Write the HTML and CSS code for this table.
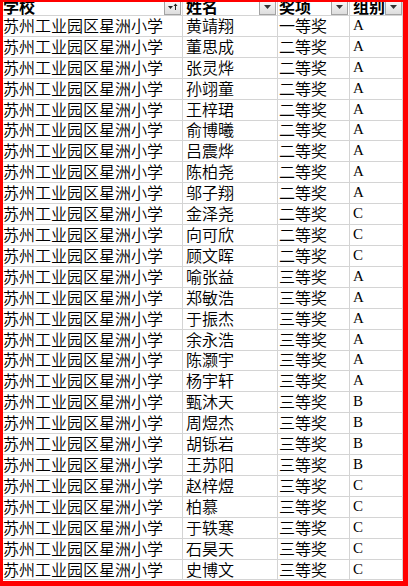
FILE: index.html
```html
<!DOCTYPE html>
<html lang="zh">
<head>
<meta charset="utf-8">
<link rel="stylesheet" href="styles.css">
</head>
<body>
<div class="frame">
  <div class="sheet">
    <div class="cell head c1"><span class="htext">学校</span><span class="btn"><svg width="17" height="17" viewBox="0 0 17 17"><defs><linearGradient id="g1" x1="0" y1="0" x2="0" y2="1"><stop offset="0" stop-color="#ffffff"/><stop offset="1" stop-color="#dcdcdc"/></linearGradient></defs><rect x="0.5" y="0.5" width="16" height="16" fill="url(#g1)" stroke="#a3a3a3"/><path d="M4 8h5l-2.5 3z" fill="#222"/><path d="M11.5 6v6" stroke="#222" stroke-width="1"/><path d="M9.5 8l2-2.5 2 2.5z" fill="#222"/></svg></span></div>
    <div class="cell head c2"><span class="htext">姓名</span><span class="btn"><svg width="17" height="17" viewBox="0 0 17 17"><defs><linearGradient id="g2" x1="0" y1="0" x2="0" y2="1"><stop offset="0" stop-color="#ffffff"/><stop offset="1" stop-color="#dcdcdc"/></linearGradient></defs><rect x="0.5" y="0.5" width="16" height="16" fill="url(#g2)" stroke="#a3a3a3"/><path d="M5 7h7l-3.5 4z" fill="#333"/></svg></span></div>
    <div class="cell head c3"><span class="htext">奖项</span><span class="btn"><svg width="17" height="17" viewBox="0 0 17 17"><defs><linearGradient id="g3" x1="0" y1="0" x2="0" y2="1"><stop offset="0" stop-color="#ffffff"/><stop offset="1" stop-color="#dcdcdc"/></linearGradient></defs><rect x="0.5" y="0.5" width="16" height="16" fill="url(#g3)" stroke="#a3a3a3"/><path d="M5 7h7l-3.5 4z" fill="#333"/></svg></span></div>
    <div class="cell head c4"><span class="htext">组别</span><span class="btn"><svg width="17" height="17" viewBox="0 0 17 17"><defs><linearGradient id="g4" x1="0" y1="0" x2="0" y2="1"><stop offset="0" stop-color="#ffffff"/><stop offset="1" stop-color="#dcdcdc"/></linearGradient></defs><rect x="0.5" y="0.5" width="16" height="16" fill="url(#g4)" stroke="#a3a3a3"/><path d="M5 7h7l-3.5 4z" fill="#333"/></svg></span></div>

    <div class="cell c1">苏州工业园区星洲小学</div><div class="cell c2">黄靖翔</div><div class="cell c3">一等奖</div><div class="cell c4 lat">A</div>
    <div class="cell c1">苏州工业园区星洲小学</div><div class="cell c2">董思成</div><div class="cell c3">二等奖</div><div class="cell c4 lat">A</div>
    <div class="cell c1">苏州工业园区星洲小学</div><div class="cell c2">张灵烨</div><div class="cell c3">二等奖</div><div class="cell c4 lat">A</div>
    <div class="cell c1">苏州工业园区星洲小学</div><div class="cell c2">孙翊童</div><div class="cell c3">二等奖</div><div class="cell c4 lat">A</div>
    <div class="cell c1">苏州工业园区星洲小学</div><div class="cell c2">王梓珺</div><div class="cell c3">二等奖</div><div class="cell c4 lat">A</div>
    <div class="cell c1">苏州工业园区星洲小学</div><div class="cell c2">俞博曦</div><div class="cell c3">二等奖</div><div class="cell c4 lat">A</div>
    <div class="cell c1">苏州工业园区星洲小学</div><div class="cell c2">吕震烨</div><div class="cell c3">二等奖</div><div class="cell c4 lat">A</div>
    <div class="cell c1">苏州工业园区星洲小学</div><div class="cell c2">陈柏尧</div><div class="cell c3">二等奖</div><div class="cell c4 lat">A</div>
    <div class="cell c1">苏州工业园区星洲小学</div><div class="cell c2">邬子翔</div><div class="cell c3">二等奖</div><div class="cell c4 lat">A</div>
    <div class="cell c1">苏州工业园区星洲小学</div><div class="cell c2">金泽尧</div><div class="cell c3">二等奖</div><div class="cell c4 lat">C</div>
    <div class="cell c1">苏州工业园区星洲小学</div><div class="cell c2">向可欣</div><div class="cell c3">二等奖</div><div class="cell c4 lat">C</div>
    <div class="cell c1">苏州工业园区星洲小学</div><div class="cell c2">顾文晖</div><div class="cell c3">二等奖</div><div class="cell c4 lat">C</div>
    <div class="cell c1">苏州工业园区星洲小学</div><div class="cell c2">喻张益</div><div class="cell c3">三等奖</div><div class="cell c4 lat">A</div>
    <div class="cell c1">苏州工业园区星洲小学</div><div class="cell c2">郑敏浩</div><div class="cell c3">三等奖</div><div class="cell c4 lat">A</div>
    <div class="cell c1">苏州工业园区星洲小学</div><div class="cell c2">于振杰</div><div class="cell c3">三等奖</div><div class="cell c4 lat">A</div>
    <div class="cell c1">苏州工业园区星洲小学</div><div class="cell c2">余永浩</div><div class="cell c3">三等奖</div><div class="cell c4 lat">A</div>
    <div class="cell c1">苏州工业园区星洲小学</div><div class="cell c2">陈灏宇</div><div class="cell c3">三等奖</div><div class="cell c4 lat">A</div>
    <div class="cell c1">苏州工业园区星洲小学</div><div class="cell c2">杨宇轩</div><div class="cell c3">三等奖</div><div class="cell c4 lat">A</div>
    <div class="cell c1">苏州工业园区星洲小学</div><div class="cell c2">甄沐天</div><div class="cell c3">三等奖</div><div class="cell c4 lat">B</div>
    <div class="cell c1">苏州工业园区星洲小学</div><div class="cell c2">周煜杰</div><div class="cell c3">三等奖</div><div class="cell c4 lat">B</div>
    <div class="cell c1">苏州工业园区星洲小学</div><div class="cell c2">胡铄岩</div><div class="cell c3">三等奖</div><div class="cell c4 lat">B</div>
    <div class="cell c1">苏州工业园区星洲小学</div><div class="cell c2">王苏阳</div><div class="cell c3">三等奖</div><div class="cell c4 lat">B</div>
    <div class="cell c1">苏州工业园区星洲小学</div><div class="cell c2">赵梓煜</div><div class="cell c3">三等奖</div><div class="cell c4 lat">C</div>
    <div class="cell c1">苏州工业园区星洲小学</div><div class="cell c2">柏慕</div><div class="cell c3">三等奖</div><div class="cell c4 lat">C</div>
    <div class="cell c1">苏州工业园区星洲小学</div><div class="cell c2">于轶寒</div><div class="cell c3">三等奖</div><div class="cell c4 lat">C</div>
    <div class="cell c1">苏州工业园区星洲小学</div><div class="cell c2">石昊天</div><div class="cell c3">三等奖</div><div class="cell c4 lat">C</div>
    <div class="cell c1">苏州工业园区星洲小学</div><div class="cell c2">史博文</div><div class="cell c3">三等奖</div><div class="cell c4 lat">C</div>
  </div>
</div>
</body>
</html>
```

FILE: styles.css
```css
html, body {
  margin: 0;
  padding: 0;
}
body {
  width: 408px;
  height: 586px;
  overflow: hidden;
}
.frame {
  box-sizing: border-box;
  width: 408px;
  height: 586px;
  background: #ff0000;
  padding: 2px 5px 5px 3px;
}
.sheet {
  width: 400px;
  height: 579px;
  background: #ffffff;
  overflow: hidden;
  display: grid;
  grid-template-columns: 180px 95px 72px 53px;
  grid-template-rows: 14px repeat(27, 20.92px);
  font-family: "Noto Sans CJK SC", "Noto Sans", sans-serif;
  font-weight: 350;
  font-size: 16px;
  color: #000;
}
.cell {
  box-sizing: border-box;
  border-right: 1px solid #d4d4d4;
  border-bottom: 1px solid #d4d4d4;
  display: flex;
  align-items: center;
  line-height: 20px;
  white-space: nowrap;
  overflow: hidden;
  padding-left: 3px;
  padding-bottom: 2px;
}
.c1 {
  padding-left: 0;
}
.c2 {
  padding-left: 3px;
}
.c3 {
  padding-left: 1px;
}
.c4 {
  padding-left: 3px;
}
.lat {
  font-family: "Liberation Serif", "Times New Roman", serif;
  font-weight: 400;
  font-size: 15px;
}
.head {
  align-items: flex-end;
  justify-content: space-between;
  padding-right: 1px;
  padding-bottom: 0;
}
.htext {
  font-weight: bold;
  line-height: 16px;
  margin-bottom: 1px;
}
.btn {
  display: block;
  width: 17px;
  height: 17px;
  flex-shrink: 0;
}
.btn svg {
  display: block;
}
```
